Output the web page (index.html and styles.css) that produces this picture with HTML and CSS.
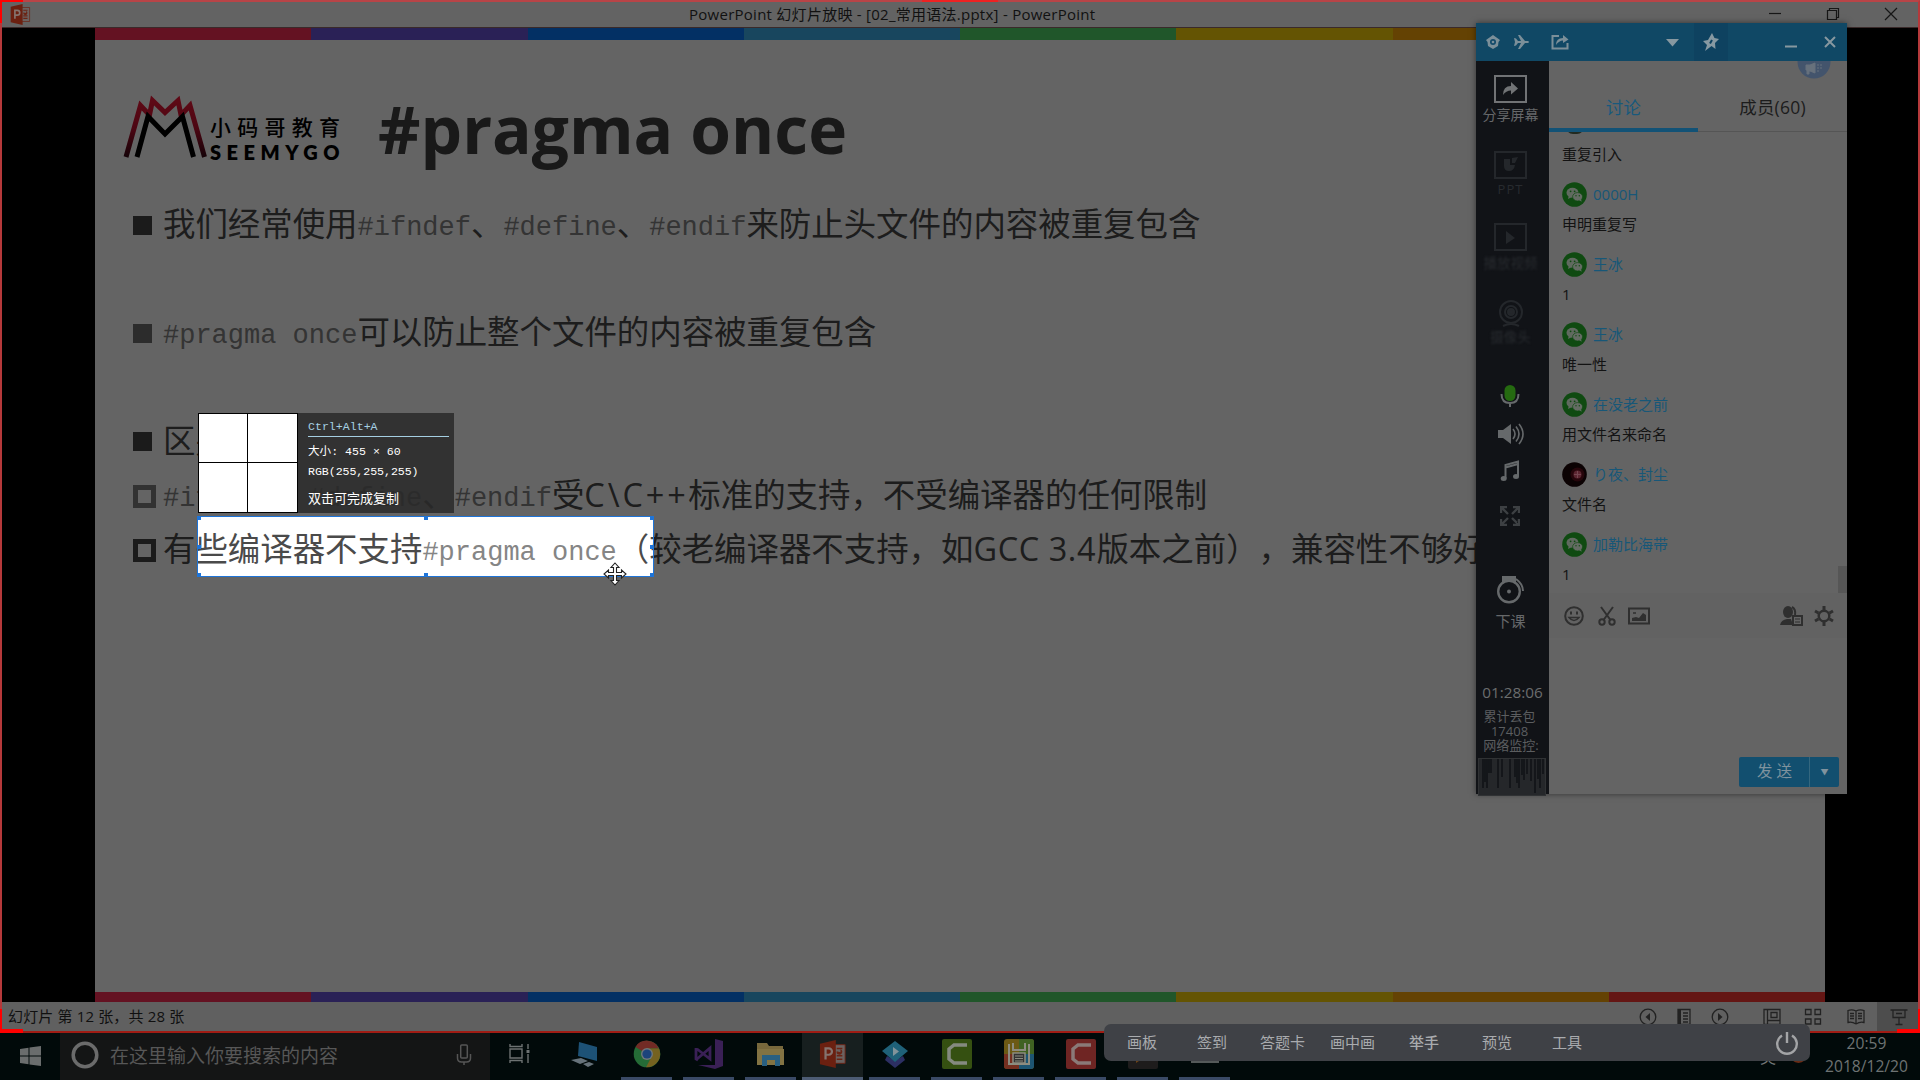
FILE: index.html
```html
<!DOCTYPE html>
<html lang="zh-CN">
<head>
<meta charset="utf-8">
<title>PowerPoint 幻灯片放映 - [02_常用语法.pptx]</title>
<link rel="stylesheet" href="styles.css">
</head>
<body>
<svg width="0" height="0" class="defs">
  <symbol id="wechat" viewBox="0 0 25 25">
    <circle cx="12.5" cy="12.5" r="12.3" fill="#0f4a11"/>
    <ellipse cx="10.5" cy="10.8" rx="6" ry="5" fill="#606a60"/>
    <path d="M6 17l1-4 3 2z" fill="#606a60"/>
    <ellipse cx="15.6" cy="14.8" rx="5" ry="4.2" fill="#646c64" stroke="#0f4a11" stroke-width=".7"/>
    <path d="M17 18l2.6 1.8-.6-3z" fill="#646c64"/>
    <g fill="#0f4a11"><circle cx="8.6" cy="9.3" r=".9"/><circle cx="12.6" cy="9.3" r=".9"/><circle cx="14" cy="13.8" r=".7"/><circle cx="17.3" cy="13.8" r=".7"/></g>
  </symbol>
  <symbol id="ppt" viewBox="0 0 28 30">
    <path d="M15 5h12v20H15z" fill="#6b6260" stroke="#6b2414" stroke-width="1"/>
    <path d="M18 9h6M18 17h6M18 20.500h6" stroke="#6b2414" stroke-width="1.600"/>
    <path d="M18 12a3 3 0 1 0 4-2v3z" fill="#6b2414"/>
    <path d="M0 4l17-4v30L0 26z" fill="#6b2010"/>
    <path d="M6 21V9h3.500a3.300 3.300 0 0 1 0 6.800H6" fill="none" stroke="#85736e" stroke-width="2.400"/>
  </symbol>
</svg>

<header class="titlebar">
  <svg class="app-icon" width="21" height="21"><use href="#ppt"/></svg>
  <span class="title">PowerPoint 幻灯片放映 - [02_常用语法.pptx] - PowerPoint</span>
  <div class="win-buttons">
    <svg width="14" height="14" viewBox="0 0 14 14"><path d="M1 6.500h12"/></svg>
    <svg width="14" height="14" viewBox="0 0 14 14"><path d="M1.500 3.500h9v9h-9zM3.500 3.500v-2h9v9h-2"/></svg>
    <svg width="14" height="14" viewBox="0 0 14 14"><path d="M1 1l12 12M13 1L1 13"/></svg>
  </div>
</header>

<main class="stage">
  <section class="slide">
    <div class="rainbow top"><i class="c1"></i><i class="c2"></i><i class="c3"></i><i class="c4"></i><i class="c5"></i><i class="c6"></i><i class="c7"></i><i class="c8"></i></div>
    <div class="slide-head">
      <svg class="logo-mark" width="86" height="66" viewBox="0 0 86 66">
        <defs><linearGradient id="lg" x1="0" y1="0" x2="0" y2="1"><stop offset="0" stop-color="#f01838"/><stop offset=".5" stop-color="#c01030"/><stop offset="1" stop-color="#380815"/></linearGradient></defs>
        <path d="M4 65L18.500 13.500L27.500 23L30.500 8.500L43 20.500L56 8.500L59 23L68 13.500L82.500 65" fill="none" stroke="url(#lg)" stroke-width="5"/>
        <path d="M15 65L26 24.500L43 42L60.500 24.500L71.500 65" fill="none" stroke="#000" stroke-width="5"/>
      </svg>
      <div class="logo-text"><span class="logo-cn"><b>小</b><b>码</b><b>哥</b><b>教</b><b>育</b></span><span class="logo-en">SEEMYGO</span></div>
      <h1>#pragma once</h1>
    </div>
    <ul class="points">
      <li><i class="sq"></i><p>我们经常使用<code>#ifndef</code>、<code>#define</code>、<code>#endif</code>来防止头文件的内容被重复包含</p></li>
      <li></li>
      <li><i class="sq soft"></i><p><code>#pragma once</code>可以防止整个文件的内容被重复包含</p></li>
      <li></li>
      <li><i class="sq"></i><p>区别</p></li>
      <li><i class="box soft"></i><p><code>#ifndef</code>、<code>#define</code>、<code>#endif</code>受<span class="latin w1">C\C++</span>标准的支持，不受编译器的任何限制</p></li>
      <li><i class="box"></i><p>有些编译器不支持<code>#pragma once</code>（较老编译器不支持，如<span class="latin w2">GCC 3.4</span>版本之前），兼容性不够好</p></li>
    </ul>
    <div class="rainbow bottom"><i class="c1"></i><i class="c2"></i><i class="c3"></i><i class="c4"></i><i class="c5"></i><i class="c6"></i><i class="c7"></i><i class="c8"></i></div>
  </section>

  <div class="selection"><i></i><i></i><i></i><i></i><i></i><i></i><i></i><i></i></div>
  <div class="capture-info">
    <div class="magnifier"></div>
    <div class="capture-text">
      <span class="hotkey">Ctrl+Alt+A</span>
      <span class="size">大小: 455 × 60</span>
      <span class="rgb">RGB(255,255,255)</span>
      <span class="hint">双击可完成复制</span>
    </div>
  </div>
  <svg class="cursor" width="24" height="24" viewBox="0 0 24 24"><path d="M12 1l4 4.500h-2.500v5h5V8l4.500 4-4.500 4v-2.500h-5v5H16L12 23l-4-4.500h2.500v-5h-5V16L1 12l4.500-4v2.500h5v-5H8z" fill="#fff" stroke="#222" stroke-width="1.100"/></svg>
</main>

<footer class="status">
  <span>幻灯片 第 12 张，共 28 张</span>
  <div class="views">
    <svg class="v1" width="18" height="18" viewBox="0 0 18 18"><circle cx="9" cy="9" r="7.800"/><path class="f" d="M11 5v8L6.500 9z"/></svg>
    <svg class="v2" width="18" height="18" viewBox="0 0 18 18"><path d="M3 1.500h12v15H3zM8 5h5M8 8h5M8 11h5M8 14h5"/><path class="f" d="M3 1h3v16H3z"/></svg>
    <svg class="v3" width="18" height="18" viewBox="0 0 18 18"><circle cx="9" cy="9" r="7.800"/><path class="f" d="M7 5v8l4.500-4z"/></svg>
    <svg class="v4" width="18" height="18" viewBox="0 0 18 18"><path d="M1 1.500h16v15H1zM4.500 1.500v15M4.500 12.500H17M8 4.500h6v5H8z"/></svg>
    <svg class="v5" width="18" height="18" viewBox="0 0 18 18"><path d="M1.500 1.500h5.500v5H1.500zM11 1.500h5.500v5H11zM1.500 11h5.500v5H1.500zM11 11h5.500v5H11z"/></svg>
    <svg class="v6" width="18" height="18" viewBox="0 0 18 18"><path d="M9 3v13M9 3Q5 1 1 2.500v12q4-1 8 1.500M9 3q4-2 8-.5v12q-4-1-8 1.500M3 5.500h4M3 8h4M3 10.500h4M11 5.500h4M11 8h4M11 10.500h4"/></svg>
    <div class="current"><svg width="18" height="18" viewBox="0 0 18 18"><path d="M.5 2h17M3 2v7.500h12V2M6 5.500h6M9 9.500V16M5.500 16.500h7"/></svg></div>
  </div>
</footer>

<nav class="taskbar">
  <div class="start"><svg width="21" height="20" viewBox="0 0 21 20" fill="#6a6d6d"><path d="M0 3l8.500-1.300v7.800H0zM9.500 1.500L21 0v9.500H9.500zM0 10.500h8.500v7.800L0 17zM9.500 10.500H21V20L9.500 18.500z"/></svg></div>
  <div class="search">
    <svg width="28" height="28" viewBox="0 0 28 28"><circle cx="14" cy="14" r="11.800" fill="none" stroke="#6b6b6b" stroke-width="3.500"/></svg>
    <span>在这里输入你要搜索的内容</span>
    <svg width="16" height="22" viewBox="0 0 16 22" fill="none" stroke="#555" stroke-width="1.500"><rect x="4.700" y="1" width="6.600" height="13" rx="1"/><path d="M1.500 10v4q0 4 4 4h5q4 0 4-4v-4M8 18v3"/></svg>
  </div>
  <div class="apps">
    <div class="app plain"><svg width="24" height="24" viewBox="0 0 24 24" fill="none" stroke="#6d7272" stroke-width="1.400"><path d="M3 7h12v9H3zM3 2v2.500h12V2M3 21v-2.500h12V21M21 2v5M21 12v9"/><path d="M21 8v3" stroke-width="3"/></svg></div>
    <div class="app plain"><svg width="28" height="28" viewBox="0 0 28 28"><path d="M9 2l18 5v14L8 16z" fill="#1d5276"/><path d="M1 20l10-2 7 3-8 3zM13 24l6-2 5 2-6 3z" fill="#66727a"/></svg></div>
    <div class="app"><svg width="28" height="28" viewBox="0 0 28 28"><circle cx="14" cy="14" r="13.300" fill="#246b36"/><path d="M14 14L2.500 7A13.300 13.300 0 0 1 26 8.500H14z" fill="#722b25"/><path d="M14 8.500h12A13.300 13.300 0 0 1 13 27.300L19 16z" fill="#756220"/><circle cx="14" cy="14" r="6" fill="#70777a"/><circle cx="14" cy="14" r="4.600" fill="#1c447b"/></svg></div>
    <div class="app"><svg width="30" height="30" viewBox="0 0 30 30"><path d="M21 0l8 2v25l-8 3-17-4 17 0z" fill="#3a2056"/><path d="M2 9v11l2 1M3 10l13 10V9L3 20" fill="none" stroke="#3a2056" stroke-width="2.800"/></svg></div>
    <div class="app"><svg width="30" height="26" viewBox="0 0 30 26"><path d="M1 2h10l2 3h14v18H1z" fill="#77683c"/><path d="M1 8h27v16H1z" fill="#827343"/><path d="M6 14h18v11h-5v-6h-8v6H6z" fill="#296082"/></svg></div>
    <div class="app active"><svg width="28" height="28"><use href="#ppt"/></svg></div>
    <div class="app"><svg width="28" height="28" viewBox="0 0 28 28"><path d="M6 16l8 5 8-5 2 4-10 8L4 20z" fill="#2c2f63"/><path d="M14 1l13 10-13 11L1 11z" fill="#1f6178"/><path d="M12 7v9l6-4.500z" fill="#81949a"/></svg></div>
    <div class="app"><svg width="30" height="30" viewBox="0 0 30 30"><rect width="30" height="30" rx="2" fill="#355011"/><path d="M25 6H12L7 10v10l5 4h13" fill="none" stroke="#858a80" stroke-width="3.500"/></svg></div>
    <div class="app"><svg width="30" height="30" viewBox="0 0 30 30"><rect width="30" height="30" rx="3" fill="#6c5914"/><path d="M15 0h12q3 0 3 3v12H15z" fill="#3f6222"/><path d="M0 15h15v15H3q-3 0-3-3z" fill="#752f20"/><path d="M15 15h15v12q0 3-3 3H15z" fill="#1d5572"/><path d="M5 5v20h20V5M9 4v7h12V4" fill="none" stroke="#8c8c80" stroke-width="2"/><path d="M9 14h12v10H9z" fill="#333" stroke="#8c8c80" stroke-width="1.500"/><path d="M11 17h8M11 19.500h8M11 22h8" stroke="#8c8c80" stroke-width="1.200"/></svg></div>
    <div class="app"><svg width="30" height="30" viewBox="0 0 30 30"><rect width="30" height="30" rx="2" fill="#6f2523"/><path d="M25 6H12L7 10v10l5 4h13" fill="none" stroke="#8a7a78" stroke-width="3.500"/></svg></div>
    <div class="app"><svg width="30" height="30" viewBox="0 0 30 30"><rect width="30" height="30" rx="2" fill="#1e1c1c"/><path d="M8 7v17l12-8z" fill="#6e4316"/></svg></div>
    <div class="app"><svg width="28" height="24" viewBox="0 0 28 24"><path d="M0 0h28v21H0z" fill="#555a5a"/></svg></div>
  </div>
  <div class="tray"><span class="ime">英</span><i class="dot"></i></div>
  <div class="clock"><span>20:59</span><span>2018/12/20</span></div>
</nav>

<aside class="chat">
  <div class="chat-head">
    <svg class="h1" width="16" height="16" viewBox="0 0 16 16"><path d="M8 1l7 5-1.500 2L13 12l-5 3-5-3-.500-4L1 6z" fill="#7b8f99"/><circle cx="8" cy="8" r="3" fill="#124a6a"/><circle cx="8" cy="8" r="1.300" fill="#7b8f99"/></svg>
    <svg class="h2" width="17" height="16" viewBox="0 0 17 16"><path d="M1 4l2 .500L5 7h3L5 1h2l5 6h3q2 1 0 2h-3l-5 6H5l3-6H5l-2 2.500L1 12l1-4z" fill="#7b8f99"/></svg>
    <svg class="h3" width="18" height="16" viewBox="0 0 18 16"><path d="M8 2H1.500v12.500h15V9" fill="none" stroke="#7b8f99" stroke-width="2"/><path d="M5 11q0-7 7-7V1l5.500 4.500L12 9V6.500Q8 6.500 5 11z" fill="#7b8f99"/></svg>
    <svg class="h4" width="13" height="8" viewBox="0 0 13 8"><path d="M0 0h13L6.500 7.500z" fill="#8798a0"/></svg>
    <div class="pin"><svg width="18" height="18" viewBox="0 0 18 18"><path d="M10 0l2.500 5L17 6l-4 4 .500 6-4-3L3 18l2-6-4-4 5-1z" fill="#8799a2"/><path d="M8 10.500l2-3.500" stroke="#0e4260" stroke-width="2"/></svg></div>
    <svg class="h5" width="12" height="12" viewBox="0 0 12 12"><path d="M0 10.500h12" stroke="#8798a0" stroke-width="2"/></svg>
    <svg class="h6" width="12" height="12" viewBox="0 0 12 12"><path d="M1 1l10 10M11 1L1 11" stroke="#8798a0" stroke-width="2"/></svg>
  </div>
  <div class="chat-body">
    <div class="rail">
      <div class="tool t-share"><svg width="33" height="28" viewBox="0 0 33 28"><rect x="1" y="1" width="31" height="26" fill="none" stroke="#717375" stroke-width="2"/><path d="M9 20q0-9 8-9V7l7 6.500-7 6v-4q-5 0-8 4.500z" fill="#717375"/></svg><span>分享屏幕</span></div>
      <div class="tool t-ppt faded"><svg width="33" height="28" viewBox="0 0 33 28"><rect x="1" y="1" width="31" height="26" fill="none" stroke="#24272b" stroke-width="2"/><path d="M10 8h6v6h5q-1 6-6 6t-5-5zM18 7l6-1-3 6h-3z" fill="#24272b"/></svg><span>PPT</span></div>
      <div class="tool t-video faded"><svg width="33" height="28" viewBox="0 0 33 28"><rect x="1" y="1" width="31" height="26" fill="none" stroke="#24272b" stroke-width="2"/><path d="M12 8v13l9-6z" fill="#24272b"/></svg><span class="smudge">播放视频</span></div>
      <div class="tool t-cam faded"><svg width="28" height="28" viewBox="0 0 28 28" fill="none" stroke="#24272b" stroke-width="2"><circle cx="14" cy="12" r="11"/><circle cx="14" cy="12" r="6"/><circle cx="14" cy="12" r="3" fill="#24272b"/><path d="M6 26q8-4 16 0"/></svg><span class="smudge">摄像头</span></div>
      <div class="cell mic"><svg width="20" height="24" viewBox="0 0 20 24"><rect x="4.500" y="1" width="11" height="16" rx="5.500" fill="#256a10"/><path d="M1.500 10q0 9 8.500 9t8.500-9M10 19v4" fill="none" stroke="#66696b" stroke-width="2"/></svg></div>
      <div class="cell speaker"><svg width="26" height="22" viewBox="0 0 26 22"><path d="M0 7h5l8-6v20l-8-6H0z" fill="#66696b"/><path d="M15 6q4 5 0 10M18 3.500q6 7.500 0 15M21 1q8 10 0 20" fill="none" stroke="#66696b" stroke-width="1.600"/></svg></div>
      <div class="cell music"><svg width="20" height="22" viewBox="0 0 20 22"><path d="M5.500 18V5L18 1.500V16M5.500 7.500L18 4" fill="none" stroke="#66696b" stroke-width="2"/><ellipse cx="3.700" cy="18.500" rx="3" ry="2.500" fill="#66696b"/><ellipse cx="16" cy="16.500" rx="3" ry="2.500" fill="#66696b"/></svg></div>
      <div class="cell expand"><svg width="20" height="20" viewBox="0 0 20 20" stroke="#3d4043" fill="none" stroke-width="2.400"><path d="M1 7V1h6M13 1h6v6M19 13v6h-6M7 19H1v-6M1 1l7 7M19 1l-7 7M19 19l-7-7M1 19l7-7"/></svg></div>
      <div class="tool t-bell"><svg width="28" height="28" viewBox="0 0 28 28"><path d="M5 0h14v6H5z" fill="#66696b"/><circle cx="12" cy="15.500" r="10.800" fill="none" stroke="#66696b" stroke-width="2.400"/><circle cx="12" cy="15.500" r="2" fill="#66696b"/><path d="M19 3q7 5 7 12" fill="none" stroke="#66696b" stroke-width="2"/></svg><span>下课</span></div>
      <div class="time">01:28:06</div>
      <div class="net"><span>累计丢包</span><span>17408</span><span>网络监控:</span></div>
      <svg class="graph" width="68" height="38" viewBox="0 0 68 38"><rect x=".5" y=".5" width="67" height="37" fill="#25272a" stroke="#303234"/><path d="M5 1v29M7 1v23M9 1v29M11 1v14M13 1v14M20 1v29M24 1v18M32 1v29M37 1v18M39 1v24M41 1v29M44 1v16M46 1v21M49 1v15M53 1v22M57 1v34M60 1v20M62 1v29M65 1v15" stroke="#111317" stroke-width="1.600"/></svg>
    </div>
    <div class="panel">
      <div class="tabs"><span class="on">讨论</span><span>成员(60)</span>
        <svg class="horn" width="34" height="18" viewBox="0 0 34 18"><circle cx="17" cy="1" r="16.500" fill="#43546c"/><path d="M9 4h4l5-2v10l-5-2h-1v3h-2V9H9zM21 3v2M21 6v2M21 9v2M24 3v2M24 6v2" fill="#67717c" stroke="#67717c"/></svg>
      </div>
      <div class="messages">
        <div class="scrap"></div>
        <p>重复引入</p>
        <div class="who"><svg><use href="#wechat"/></svg><span>0000H</span></div><p>申明重复写</p>
        <div class="who"><svg><use href="#wechat"/></svg><span>王冰</span></div><p>1</p>
        <div class="who"><svg><use href="#wechat"/></svg><span>王冰</span></div><p>唯一性</p>
        <div class="who"><svg><use href="#wechat"/></svg><span>在没老之前</span></div><p>用文件名来命名</p>
        <div class="who"><svg viewBox="0 0 25 25"><circle cx="12.500" cy="12.500" r="12.300" fill="#0b0203"/><circle cx="15.500" cy="12.500" r="7" fill="#26060b"/><circle cx="15.500" cy="12.500" r="4" fill="#5b2530"/><path d="M15.500 9v7M12 12.500h7" stroke="#754650"/></svg><span>り夜、封尘</span></div><p>文件名</p>
        <div class="who"><svg><use href="#wechat"/></svg><span>加勒比海带</span></div><p>1</p>
        <i class="thumb"></i>
      </div>
      <div class="input-tools">
        <svg width="20" height="20" viewBox="0 0 20 20" fill="none" stroke="#2f2f2f" stroke-width="2"><circle cx="10" cy="10" r="8.800"/><path d="M5 11.500q5 6 10 0z" stroke-width="1.500"/><path d="M7 5.500v3M13 5.500v3"/></svg>
        <svg class="i2" width="18" height="20" viewBox="0 0 18 20" fill="none" stroke="#2f2f2f" stroke-width="2"><path d="M3 1l9.500 13M15 1L5.500 14"/><circle cx="4" cy="16" r="2.700"/><circle cx="14" cy="16" r="2.700"/></svg>
        <svg class="i3" width="22" height="18" viewBox="0 0 22 18"><rect x="1" y="1.500" width="20" height="15" fill="none" stroke="#2f2f2f" stroke-width="2"/><path d="M4 14v-3l4-1 3 1 4-5 3 2v6z" fill="#2f2f2f"/><path d="M5 6h3" stroke="#2f2f2f" stroke-width="1.500"/></svg>
        <svg class="i4" width="23" height="20" viewBox="0 0 23 20"><ellipse cx="8" cy="6" rx="5" ry="6" fill="#2f2f2f"/><path d="M0 19q1-5 7-6h4l2 6z" fill="#2f2f2f"/><path d="M12 1q4 2 3 8" fill="none" stroke="#2f2f2f" stroke-width="2"/><path d="M13 10h9v9h-9z" fill="#646464" stroke="#2f2f2f" stroke-width="2"/><path d="M15 13h5M15 16h5" stroke="#2f2f2f"/></svg>
        <svg class="i5" width="20" height="20" viewBox="0 0 20 20" fill="none" stroke="#2f2f2f"><circle cx="10" cy="10" r="5.300" stroke-width="2.400"/><path d="M10 0v4M10 16v4M1 5l3.500 2M15.500 13l3.500 2M19 5l-3.500 2M4.500 13L1 15" stroke-width="3"/></svg>
      </div>
      <div class="compose"><div class="send"><span>发 送</span><i>▼</i></div></div>
    </div>
  </div>
</aside>

<div class="toolbox">
  <span>画板</span><span>签到</span><span>答题卡</span><span>画中画</span><span class="thick">举手</span><span>预览</span><span>工具</span>
  <svg width="24" height="24" viewBox="0 0 24 24" fill="none" stroke="#a3a4a6" stroke-width="2.400"><path d="M7 4.500a9.800 9.800 0 1 0 10 0M12 1v11"/></svg>
</div>

<div class="frame"><i class="tl"></i><i class="tm"></i><i class="bl"></i><i class="br"></i></div>
</body>
</html>
```
FILE: styles.css
```css
* { box-sizing: border-box; }
body {
  margin: 0;
  width: 1920px;
  height: 1080px;
  overflow: hidden;
  position: relative;
  display: grid;
  grid-template-rows: 28px 974px 30px 48px;
  background: #000;
  font-family: "Open Sans", "Noto Sans CJK SC", sans-serif;
  text-spacing-trim: space-all;
}
.defs { position: absolute; }
svg { display: block; flex: none; }
i { font-style: normal; }

/* title bar */
.titlebar {
  display: grid;
  grid-template-columns: 679px auto 1fr;
  align-items: center;
  background: #636363;
  border-bottom: 1px solid #3a2a2a;
  padding: 1px 22px 0 10px;
}
.title { font-size: 15px; line-height: 24px; letter-spacing: .26px; color: #111; white-space: nowrap; }
.win-buttons { display: flex; justify-content: flex-end; gap: 44px; }
.win-buttons svg { fill: none; stroke: #161616; stroke-width: 1.2; }

/* slide */
.stage { position: relative; overflow: hidden; background: #000; padding: 0 95px; }
.slide { width: 1730px; height: 974px; background: #fff; display: flex; flex-direction: column; }
.rainbow { display: grid; grid-template-columns: repeat(8, 1fr); flex: none; }
.rainbow.top { height: 12px; }
.rainbow.bottom { height: 10px; margin-top: auto; }
.c1 { background: #ff3057; } .c2 { background: #6b54dc; } .c3 { background: #087aff; } .c4 { background: #3db3f0; }
.c5 { background: #52db6b; } .c6 { background: #ffd60a; } .c7 { background: #ffa80a; } .c8 { background: #ff3833; }
.slide-head { display: flex; height: 158px; padding: 52px 0 0 27px; flex: none; }
.logo-text { display: flex; flex-direction: column; width: 130px; margin-left: 2px; padding-top: 24px; color: #000; }
.logo-cn { display: flex; justify-content: space-between; font-size: 21px; line-height: 22px; }
.logo-cn b { font-weight: 500; }
.logo-en { font: 800 20px/22px Lato, sans-serif; letter-spacing: 5.5px; margin-top: 3px; white-space: nowrap; }
h1 { margin: -3px 0 0 38px; font-size: 65.8px; line-height: 80px; color: #404040; white-space: nowrap; }
.points { list-style: none; margin: 0; padding: 0 0 0 38px; font-size: 32.43px; color: #4a4a4a; }
.points li { display: flex; align-items: center; height: 54.2px; white-space: nowrap; }
.points p { margin: 0; padding-bottom: 2px; line-height: 52px; height: 54px; }
.points code { font-family: "Liberation Mono", monospace; font-size: 27px; line-height: 1; vertical-align: 1px; color: #858585; }
.latin { display: inline-block; line-height: 1; }
.w1 { width: 104px; letter-spacing: 2.9px; }
.w2 { width: 123px; letter-spacing: .6px; }
.sq { width: 19px; height: 19px; margin-right: 11px; background: #454545; }
.sq.soft { background: #707070; }
.box { width: 23px; height: 23px; margin-right: 7px; border: 5px solid #454545; }
.box.soft { border-color: #808080; }

/* capture overlay: the shadow dims everything outside the selected area */
.selection {
  position: absolute; left: 197px; top: 488px; width: 457px; height: 61px;
  border: 1px solid #1e74d8;
  box-shadow: 0 0 0 2000px rgba(0, 0, 0, .608);
}
.selection i { position: absolute; width: 4px; height: 4px; background: #1e74d8; }
.selection i:nth-child(1) { left: -1px; top: -1px; }
.selection i:nth-child(2) { left: 226px; top: -1px; }
.selection i:nth-child(3) { right: -1px; top: -1px; }
.selection i:nth-child(4) { left: -1px; top: 28px; }
.selection i:nth-child(5) { right: -1px; top: 28px; }
.selection i:nth-child(6) { left: -1px; bottom: -1px; }
.selection i:nth-child(7) { left: 226px; bottom: -1px; }
.selection i:nth-child(8) { right: -1px; bottom: -1px; }
.capture-info { position: absolute; left: 198px; top: 385px; width: 256px; height: 100px; display: flex; background: rgba(42, 42, 42, .87); }
.magnifier {
  width: 100px; border: 1px solid #000;
  background: linear-gradient(#000, #000) 48px 0 / 1px 100% no-repeat, linear-gradient(#000, #000) 0 48px / 100% 1px no-repeat, #fff;
}
.capture-text { display: flex; flex-direction: column; padding: 4px 5px 0 10px; width: 156px; color: #fff; font: 11.6px/20px "Liberation Mono", "Noto Sans CJK SC", monospace; white-space: nowrap; }
.hotkey { height: 20px; color: #a5cfe2; border-bottom: 1px solid #a5cfe2; }
.size { margin-top: 5px; }
.rgb { letter-spacing: -.05px; }
.hint { font-size: 13px; margin-top: 8px; }
.cursor { position: absolute; left: 603px; top: 534px; }

/* status bar */
.status { display: flex; justify-content: space-between; align-items: center; background: #606060; color: #101010; font-size: 15px; padding-left: 8px; }
.status > span { padding-bottom: 4px; letter-spacing: .15px; }
.views { display: flex; align-items: center; height: 100%; padding-bottom: 1px; }
.views svg { fill: none; stroke: #222; stroke-width: 1.3; }
.views .f { fill: #222; stroke: none; }
.v2 { margin-left: 18px; } .v3 { margin-left: 18px; } .v4 { margin-left: 34px; } .v5 { margin-left: 23px; } .v6 { margin-left: 25px; }
.current { display: flex; align-items: center; justify-content: center; width: 43px; height: 29px; margin-left: 12px; background: #4d4d4d; }

/* taskbar */
.taskbar { display: flex; background: #010a0a; }
.start { width: 60px; display: flex; align-items: center; justify-content: center; }
.search { width: 430px; display: flex; align-items: center; padding: 0 18px 2px 11px; background: #141515; color: #575757; font-size: 19px; }
.search span { margin-left: 11px; flex: 1; white-space: nowrap; }
.apps { display: flex; }
.app { width: 51px; margin-right: 11px; height: 48px; display: flex; align-items: center; justify-content: center; padding-bottom: 2px; border-bottom: 3px solid #3a4a66; }
.app.plain { width: 58px; margin-right: 7px; border-color: transparent; }
.app.plain + .app:not(.plain) { margin-left: 1px; }
.app.active { width: 61px; margin: 0 6px 0 -5px; background: #171f1f; border-color: #4d5c74; }
.tray { display: flex; align-items: center; margin-left: auto; gap: 14px; color: #707575; font-size: 16px; }
.dot { width: 17px; height: 17px; border-radius: 50%; background: #6a2c16; margin-bottom: 4px; }
.clock { width: 84px; margin: 0 11px 0 18px; padding-right: 1px; display: flex; flex-direction: column; align-items: center; color: #6e7373; font-size: 15.6px; line-height: 23px; }

/* chat window */
.chat { position: absolute; left: 1476px; top: 23px; width: 371px; height: 771px; display: flex; flex-direction: column; background: #646464; box-shadow: 0 0 6px rgba(0, 0, 0, .5); }
.chat-head { display: flex; align-items: center; height: 38px; background: #104865; flex: none; }
.h1 { margin-left: 9px; } .h2 { margin-left: 12px; } .h3 { margin-left: 21px; } .h4 { margin-left: 97px; margin-top: 2px; }
.pin { display: flex; align-items: center; justify-content: center; width: 34px; height: 38px; margin-left: 15px; background: #0e4260; }
.h5 { margin-left: 57px; } .h6 { margin-left: 27px; }
.chat-body { display: flex; flex: 1; min-height: 0; }
.rail { width: 73px; background: #111317; display: flex; flex-direction: column; align-items: center; color: #66686a; padding-right: 4px; }
.tool { display: flex; flex-direction: column; align-items: center; flex: none; font-size: 14px; line-height: 20px; white-space: nowrap; }
.tool span { margin-top: 2px; }
.faded { color: #282b2f; }
.smudge { filter: blur(1px); }
.t-share { height: 77px; padding-top: 14px; }
.t-ppt { height: 71px; padding-top: 13px; font-size: 13px; letter-spacing: 1px; }
.t-ppt span { margin-top: 0; }
.t-video { height: 75px; padding-top: 14px; font-size: 13.5px; }
.t-cam { height: 88px; padding-top: 16px; font-size: 13.5px; }
.t-cam span { margin-top: -1px; }
.cell { display: flex; align-items: center; flex: none; }
.mic { height: 48px; } .speaker { height: 28px; } .music { height: 46px; } .expand { height: 44px; }
.mic, .music, .expand { margin-right: 2px; }
.t-bell { height: 142px; padding-top: 38px; font-size: 15px; }
.t-bell svg { margin-left: 2px; }
.t-bell span { margin-top: 7px; }
.time { font-size: 15.3px; line-height: 24px; margin: 0 0 0 4px; color: #6b6d6e; flex: none; }
.net { display: flex; flex-direction: column; align-items: center; font-size: 13px; line-height: 14.5px; margin: 5px 2px 0 0; color: #5c5e60; flex: none; }
.net span:last-child { margin-left: 3px; }
.graph { margin: 5px 0 0 3px; }
.panel { flex: 1; display: flex; flex-direction: column; min-width: 0; }
.tabs { position: relative; display: flex; height: 71px; flex: none; font-size: 17.5px; line-height: 92px; text-align: center; color: #1c1c1c; border-bottom: 1px solid #555; }
.tabs span { width: 150px; letter-spacing: .2px; }
.tabs .on { color: #18597c; border-bottom: 4px solid #125276; height: 71px; }
.horn { position: absolute; right: 16px; top: 0; }
.messages { position: relative; height: 461px; padding: 4.5px 0 0 13px; overflow: hidden; flex: none; font-size: 15px; }
.messages p { margin: 0 0 10px; line-height: 35px; height: 35px; color: #131313; }
.who { display: flex; align-items: center; gap: 6px; height: 25px; color: #175778; }
.who span { padding-bottom: 1px; }
.who svg { width: 25px; height: 25px; }
.scrap { position: absolute; left: 17px; top: -5px; width: 18px; height: 7px; border-radius: 0 0 9px 9px; background: #222a20; }
.thumb { position: absolute; right: 0; bottom: 0; width: 9px; height: 27px; background: #565656; }
.input-tools { display: flex; align-items: center; height: 45px; padding: 0 13px 0 15px; background: #626262; flex: none; }
.i2 { margin-left: 14px; } .i3 { margin-left: 12px; } .i4 { margin-left: auto; } .i5 { margin-left: 11px; }
.compose { flex: 1; display: flex; justify-content: flex-end; align-items: flex-end; padding: 0 8px 7px; }
.send { display: flex; width: 100px; height: 30px; background: #124f6f; border-radius: 2px; color: #7f939e; font-size: 15.5px; line-height: 29px; text-align: center; }
.send span { width: 71px; padding-left: 1px; border-right: 1px solid #34677f; }
.send i { flex: 1; font-size: 8px; }

/* classroom toolbar */
.toolbox { position: absolute; left: 1104px; top: 1024px; width: 706px; height: 37px; display: flex; align-items: center; padding-left: 23px; border-radius: 7px; background: #3f4146; color: #a9abae; font-size: 15px; white-space: nowrap; }
.toolbox span { padding-bottom: 2px; }
.toolbox span + span { margin-left: 40px; }
.toolbox span:nth-child(3) { margin-left: 33px; }
.toolbox span:nth-child(4) { margin-left: 25px; }
.toolbox span:nth-child(5) { margin-left: 34px; }
.toolbox span:nth-child(6) { margin-left: 43px; }
.toolbox .thick { font-weight: 500; }
.toolbox svg { margin: 0 11px 0 auto; }

/* red recording frame */
.frame { position: absolute; left: 0; top: 0; width: 1920px; height: 1033px; border: 2px solid #b5393b; border-top-color: #b84447; border-bottom-color: #a01c14; pointer-events: none; clip-path: polygon(0 0, 100% 0, 100% 100%, 1810px 100%, 1810px 1000px, 1104px 1000px, 1104px 100%, 0 100%); }
.frame i { position: absolute; }
.tl { left: -2px; top: -2px; width: 23px; height: 23px; border-left: 2px solid #f00; border-top: 2px solid #f00; }
.tm { left: 920px; top: -2px; width: 76px; height: 2px; background: #ee2222; }
.bl { left: -2px; bottom: -2px; width: 23px; height: 24px; border-left: 2px solid #f00; border-bottom: 4px solid #f00; }
.br { right: -2px; bottom: -2px; width: 23px; height: 24px; border-right: 2px solid #f00; border-bottom: 4px solid #f00; }
```
